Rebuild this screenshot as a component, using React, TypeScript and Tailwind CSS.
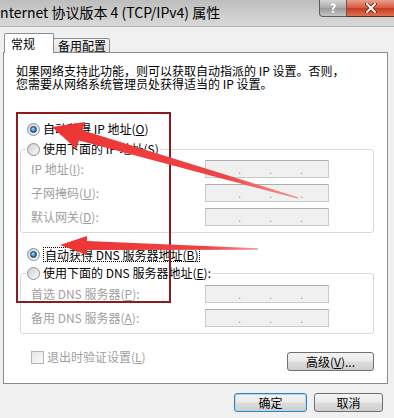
const Radio = ({ checked }: { checked?: boolean }) => (
  <span className="w-[13px] h-[13px] rounded-full border border-[#8e8f8f] bg-[linear-gradient(135deg,#cfcfcf,#fbfbfb)] flex items-center justify-center shrink-0">
    {checked && (
      <span className="w-[7px] h-[7px] rounded-full border border-[#1b3f66] bg-[radial-gradient(circle_at_40%_40%,#b5e6ff,#2f7fc4_55%,#0d3c6c)]" />
    )}
  </span>
);

const IpBox = () => (
  <div className="w-[124px] h-[18px] bg-[#f0f0f0] border border-[#c9c9c9] border-t-[#adadad] flex items-center pl-[32px] gap-[29px] text-[#a8a8a8] text-[11px] leading-none">
    <span className="w-[2px]">.</span>
    <span className="w-[2px]">.</span>
    <span className="w-[2px]">.</span>
  </div>
);

const Field = ({ label }: { label: React.ReactNode }) => (
  <div className="flex items-center h-[18px] pl-[10px]">
    <span className="w-[174px] text-[#a0a0a0]">{label}</span>
    <IpBox />
  </div>
);

const btn =
  "h-[19px] rounded-[3px] border bg-[linear-gradient(#f3f3f3_0%,#ebebeb_48%,#dcdcdc_52%,#cfcfcf_100%)] flex items-center justify-center text-[12px] text-black";

export default function App() {
  return (
    <div className="relative w-[394px] h-[418px] overflow-hidden bg-[#f0f0f0] font-['Noto_Sans_CJK_SC','Noto_Sans',sans-serif] text-[12px] text-black">
      {/* title bar */}
      <div className="h-[27px] flex items-start bg-[linear-gradient(#bdbdbd,#cfcfcf_60%,#d8d8d8)] border-b border-[#b4b4b4]">
        <span className="ml-[-4px] mt-[3px] text-[14px] leading-[18px] whitespace-nowrap">
          Internet 协议版本 4 (TCP/IPv4) 属性
        </span>
        <div className="ml-auto flex h-[18px]">
          <div className="w-[28px] h-[17px] rounded-bl-[4px] border border-t-0 border-[#5c5c5c] bg-[linear-gradient(#d6d6d6,#a9a9a9_50%,#9a9a9a_51%,#c5c5c5)] flex items-center justify-center text-white text-[12px] font-bold leading-none">
            ?
          </div>
          <div className="w-[47px] h-[17px] border-b border-[#5c2a20] bg-[linear-gradient(#e5a08c,#d9573e_50%,#c73a22_51%,#e0704f)] flex items-center justify-center">
            <svg width="12" height="10" viewBox="0 0 12 10">
              <path d="M2 1 L10 9 M10 1 L2 9" stroke="#5a1a10" strokeWidth="3.4" strokeLinecap="square" />
              <path d="M2 1 L10 9 M10 1 L2 9" stroke="#ffffff" strokeWidth="2" strokeLinecap="square" />
            </svg>
          </div>
        </div>
      </div>

      {/* tabs */}
      <div className="relative z-10 -mb-px mt-[6px] pl-[4px] flex items-end h-[20px]">
        <div className="h-[20px] w-[50px] bg-white border border-b-0 border-[#898c95] rounded-t-[2px] pl-[6px] flex items-center">
          常规
        </div>
        <div className="h-[15px] w-[57px] -ml-px bg-[linear-gradient(#f6f6f6,#e2e2e2)] border border-[#898c95] rounded-t-[2px] pl-[4px] flex items-center">
          备用配置
        </div>
      </div>

      {/* panel */}
      <div className="mx-[3px] w-[385px] h-[332px] bg-white border border-[#898c95] flex flex-col">
        <div className="mt-[11px] ml-[12px] leading-[13px]">
          <div className="h-[13px]">如果网络支持此功能，则可以获取自动指派的 IP 设置。否则，</div>
          <div className="h-[13px]">您需要从网络系统管理员处获得适当的 IP 设置。</div>
        </div>

        <div className="mt-[31px] ml-[23px] h-[16px] flex items-center gap-[3px]">
          <Radio checked />
          <span>
            自动获得 IP 地址(<u>O</u>)
          </span>
        </div>

        <fieldset className="mt-[4px] ml-[16px] w-[354px] border border-[#d9d9d9] rounded-[3px] pb-[6px] flex flex-col gap-[6px]">
          <legend className="ml-[5px] px-[1px] bg-white">
            <span className="h-[16px] flex items-center gap-[3px]">
              <Radio />
              <span>
                使用下面的 IP 地址(<u>S</u>)
              </span>
            </span>
          </legend>
          <div className="mt-[3px]">
            <Field label={<>IP 地址(<u>I</u>):</>} />
          </div>
          <Field label={<>子网掩码(<u>U</u>):</>} />
          <Field label={<>默认网关(<u>D</u>):</>} />
        </fieldset>

        <div className="mt-[13px] ml-[23px] h-[16px] flex items-center gap-[3px]">
          <Radio checked />
          <span className="border border-dotted border-black px-px leading-[13px]">
            自动获得 DNS 服务器地址(<u>B</u>)
          </span>
        </div>

        <fieldset className="mt-[3px] ml-[16px] w-[354px] border border-[#d9d9d9] rounded-[3px] pb-[6px] flex flex-col gap-[6px]">
          <legend className="ml-[5px] px-[1px] bg-white">
            <span className="h-[16px] flex items-center gap-[3px]">
              <Radio />
              <span>
                使用下面的 DNS 服务器地址(<u>E</u>):
              </span>
            </span>
          </legend>
          <div className="mt-[4px]">
            <Field label={<>首选 DNS 服务器(<u>P</u>):</>} />
          </div>
          <Field label={<>备用 DNS 服务器(<u>A</u>):</>} />
        </fieldset>

        <div className="mt-[15px] flex items-start">
          <div className="ml-[27px] h-[16px] flex items-center gap-[3px] text-[#a0a0a0]">
            <span className="w-[13px] h-[13px] border border-[#b5b5b5] bg-[linear-gradient(135deg,#e6e6e6,#fafafa)]" />
            <span>
              退出时验证设置(<u>L</u>)
            </span>
          </div>
          <button className={`${btn} ml-auto mr-[13px] mt-[3px] w-[87px] border-[#707070]`}>
            高级(<u>V</u>)...
          </button>
        </div>
      </div>

      {/* dialog buttons */}
      <div className="mt-[9px] pr-[11px] flex justify-end gap-[7px]">
        <button className={`${btn} w-[73px] border-[#3c7fb1] shadow-[inset_0_0_0_1px_#a8dcf5]`}>确定</button>
        <button className={`${btn} w-[69px] border-[#707070]`}>取消</button>
      </div>

      {/* annotations */}
      <div className="absolute left-[16px] top-[112px] w-[155px] h-[191px] border-2 border-[#8b1c22] pointer-events-none" />
      <svg className="absolute left-0 top-0 pointer-events-none" width="394" height="418" viewBox="0 0 394 418">
        <defs>
          <linearGradient id="a1" x1="52" y1="127" x2="298" y2="198" gradientUnits="userSpaceOnUse">
            <stop offset="0" stopColor="#ec3434" />
            <stop offset="0.7" stopColor="#ef4444" />
            <stop offset="1" stopColor="#f39a9a" />
          </linearGradient>
          <linearGradient id="a2" x1="60" y1="245" x2="258" y2="249" gradientUnits="userSpaceOnUse">
            <stop offset="0" stopColor="#ec3434" />
            <stop offset="0.75" stopColor="#ef4444" />
            <stop offset="1" stopColor="#f39a9a" />
          </linearGradient>
        </defs>
        <polygon
          fill="url(#a1)"
          points="52,127 85,122 82.6,130.3 298.2,197.2 297.8,198.8 79,140.4 76.5,149"
        />
        <polygon
          fill="url(#a2)"
          points="60,245 87,236 87,241 258,248.2 258,249.8 87,250 87,255"
        />
      </svg>
    </div>
  );
}
